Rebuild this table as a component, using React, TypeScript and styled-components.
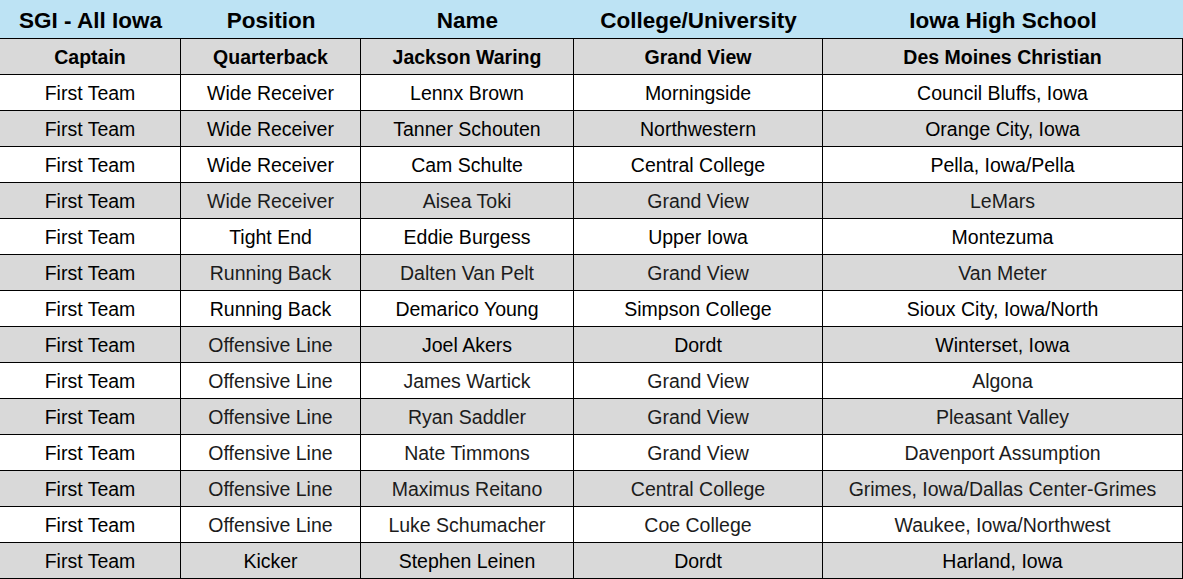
import styled, { createGlobalStyle } from "styled-components";

// estilos globais
const Global = createGlobalStyle`
  body {
    margin: 0;
    background: #ffffff;
    font-family: "Liberation Sans", Arial, sans-serif;
  }
`

const Table = styled.div`
  width: 1183px;
  display: flex;
  flex-direction: column;
`

const Row = styled.div<{ $shade?: "head" | "grey" | "white" }>`
  display: grid;
  grid-template-columns: 181px 180px 213px 249px 360px;
  height: ${(p) => (p.$shade === "head" ? "39px" : "36px")};
  background-color: ${(p) =>
    p.$shade === "head" ? "#bde3f4" : p.$shade === "grey" ? "#d9d9d9" : "#ffffff"};
`

const HeadCell = styled.div`
  box-sizing: border-box;
  border-bottom: 1px solid #000;
  display: flex;
  align-items: center;
  justify-content: center;
  font-weight: bold;
  font-size: 22.5px;
  color: #000;
  padding-top: 3px;
  white-space: nowrap;
`

const Cell = styled.div<{ $bold?: boolean; $muted?: boolean }>`
  box-sizing: border-box;
  border-right: 1px solid #000;
  border-bottom: 1px solid #000;
  display: flex;
  align-items: center;
  justify-content: center;
  font-size: 19.5px;
  font-weight: ${(p) => (p.$bold ? "bold" : "normal")};
  color: ${(p) => (p.$muted ? "#1c1c1c" : "#000")};
  white-space: nowrap;
  padding-top: 1px;
`

type Linha = { cells: string[]; muted?: boolean[] }

const header = ["SGI - All Iowa", "Position", "Name", "College/University", "Iowa High School"]

const M = true
const N = false

const linhas: Linha[] = [
  { cells: ["First Team", "Wide Receiver", "Lennx Brown", "Morningside", "Council Bluffs, Iowa"] },
  { cells: ["First Team", "Wide Receiver", "Tanner Schouten", "Northwestern", "Orange City, Iowa"] },
  { cells: ["First Team", "Wide Receiver", "Cam Schulte", "Central College", "Pella, Iowa/Pella"] },
  { cells: ["First Team", "Wide Receiver", "Aisea Toki", "Grand View", "LeMars"], muted: [N, M, M, M, M] },
  { cells: ["First Team", "Tight End", "Eddie Burgess", "Upper Iowa", "Montezuma"] },
  { cells: ["First Team", "Running Back", "Dalten Van Pelt", "Grand View", "Van Meter"], muted: [N, M, M, M, M] },
  { cells: ["First Team", "Running Back", "Demarico Young", "Simpson College", "Sioux City, Iowa/North"] },
  { cells: ["First Team", "Offensive Line", "Joel Akers", "Dordt", "Winterset, Iowa"], muted: [N, M, N, N, N] },
  { cells: ["First Team", "Offensive Line", "James Wartick", "Grand View", "Algona"], muted: [N, M, M, M, M] },
  { cells: ["First Team", "Offensive Line", "Ryan Saddler", "Grand View", "Pleasant Valley"], muted: [N, M, M, M, M] },
  { cells: ["First Team", "Offensive Line", "Nate Timmons", "Grand View", "Davenport Assumption"], muted: [N, M, M, M, M] },
  { cells: ["First Team", "Offensive Line", "Maximus Reitano", "Central College", "Grimes, Iowa/Dallas Center-Grimes"], muted: [N, M, M, M, M] },
  { cells: ["First Team", "Offensive Line", "Luke Schumacher", "Coe College", "Waukee, Iowa/Northwest"], muted: [N, M, M, M, M] },
  { cells: ["First Team", "Kicker", "Stephen Leinen", "Dordt", "Harland, Iowa"] },
]

export default function App() {
  return (
    <>
      <Global />
      <Table>
        <Row $shade="head">
          {header.map((h) => (
            <HeadCell key={h}>{h}</HeadCell>
          ))}
        </Row>
        <Row $shade="grey">
          {["Captain", "Quarterback", "Jackson Waring", "Grand View", "Des Moines Christian"].map((c) => (
            <Cell key={c} $bold>{c}</Cell>
          ))}
        </Row>
        {linhas.map((l, i) => (
          <Row key={i} $shade={i % 2 === 0 ? "white" : "grey"}>
            {l.cells.map((c, j) => (
              <Cell key={j} $muted={l.muted ? l.muted[j] : false}>{c}</Cell>
            ))}
          </Row>
        ))}
      </Table>
    </>
  )
}
